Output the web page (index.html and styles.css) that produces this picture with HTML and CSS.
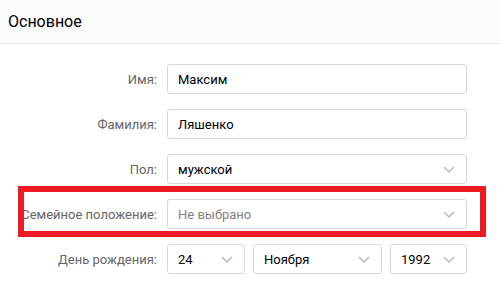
FILE: index.html
```html
<!DOCTYPE html>
<html lang="ru">
<head>
  <meta charset="UTF-8" />
  <meta name="viewport" content="width=device-width, initial-scale=1.0" />
  <title>Основное</title>
  <link rel="stylesheet" href="styles.css">
</head>
<body>
  <div class="header">Основное</div>

  <div class="form">
    <div class="row">
      <label class="label">Имя:</label>
      <div class="field"><span class="value">Максим</span></div>
    </div>
    <div class="row">
      <label class="label">Фамилия:</label>
      <div class="field"><span class="value">Ляшенко</span></div>
    </div>
    <div class="row">
      <label class="label">Пол:</label>
      <div class="field select">
        <span class="value">мужской</span>
        <svg class="chevron" width="12" height="7" viewBox="0 0 12 7"><polyline points="1,1 6,6 11,1" /></svg>
      </div>
    </div>
    <!-- выделено рамкой -->
    <div class="row marked">
      <label class="label">Семейное положение:</label>
      <div class="field select">
        <span class="value placeholder">Не выбрано</span>
        <svg class="chevron" width="12" height="7" viewBox="0 0 12 7"><polyline points="1,1 6,6 11,1" /></svg>
      </div>
    </div>
    <div class="row">
      <label class="label">День рождения:</label>
      <div class="date">
        <div class="field select day">
          <span class="value">24</span>
          <svg class="chevron" width="12" height="7" viewBox="0 0 12 7"><polyline points="1,1 6,6 11,1" /></svg>
        </div>
        <div class="field select month">
          <span class="value">Ноября</span>
          <svg class="chevron" width="12" height="7" viewBox="0 0 12 7"><polyline points="1,1 6,6 11,1" /></svg>
        </div>
        <div class="field select year">
          <span class="value">1992</span>
          <svg class="chevron" width="12" height="7" viewBox="0 0 12 7"><polyline points="1,1 6,6 11,1" /></svg>
        </div>
      </div>
    </div>
    <div class="row">
      <label class="label"></label>
      <div class="field"></div>
    </div>
  </div>
</body>
</html>
```

FILE: styles.css
```css
body {
  margin: 0;
  font-family: Roboto, "Liberation Sans", sans-serif;
  font-size: 13px;
  color: #000;
  background: #fff;
}
.header {
  height: 43px;
  line-height: 43px;
  padding-left: 8px;
  font-size: 16px;
  color: #000;
  background: #fafbfc;
  border-bottom: 1px solid #e7e8ec;
}
.form {
  padding-top: 20px;
  display: flex;
  flex-direction: column;
  gap: 15px;
}
.row {
  display: flex;
  align-items: center;
  gap: 10px;
  position: relative;
}
.label {
  width: 157px;
  text-align: right;
  color: #656565;
  white-space: nowrap;
}
.field {
  box-sizing: border-box;
  width: 300px;
  height: 30px;
  padding: 0 11px 0 10px;
  border: 1px solid #d3d9de;
  border-radius: 3px;
  background: #fff;
  display: flex;
  align-items: center;
  justify-content: space-between;
}
.placeholder {
  color: #828282;
}
.chevron polyline {
  fill: none;
  stroke: #aeb7c2;
  stroke-width: 1.4;
}
.date {
  display: flex;
  gap: 8px;
}
.day { width: 78px; }
.month { width: 129px; }
.year { width: 77px; }
.marked::after {
  content: "";
  position: absolute;
  top: -13px;
  bottom: -8px;
  left: 18px;
  right: 14px;
  border: 6px solid #ed1c24;
  pointer-events: none;
}
```
